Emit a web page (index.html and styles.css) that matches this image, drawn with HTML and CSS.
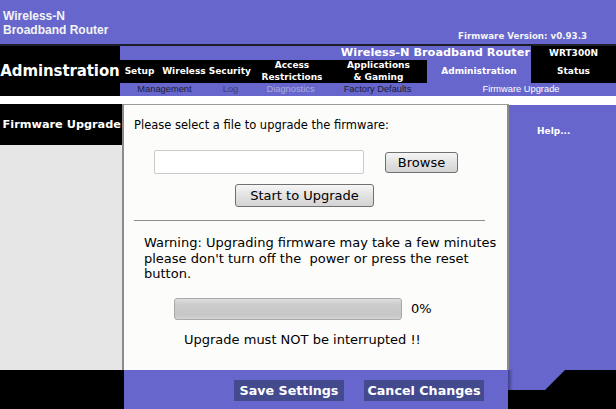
FILE: index.html
```html
<!DOCTYPE html>
<html lang="en">
<head>
<meta charset="utf-8">
<title>Firmware Upgrade</title>
<link rel="stylesheet" href="styles.css">
</head>
<body>
<div class="page">
  <header class="top">
    <div class="brand">Wireless-N<br>Broadband Router</div>
    <div class="fw">Firmware Version: v0.93.3</div>
  </header>

  <nav class="nav">
    <div class="nav-title">Adminstration</div>
    <div class="nav-grid">
      <div class="strip">Wireless-N Broadband Router</div>
      <div class="model">
        <span class="model-name">WRT300N</span>
        <span class="model-tab">Status</span>
      </div>
      <div class="tabs">
        <div class="tab tab-setup">Setup</div>
        <div class="tab tab-wireless">Wireless Security</div>
        <div class="tab tab-access">Access<br>Restrictions</div>
        <div class="tab tab-apps">Applications<br>&amp; Gaming</div>
        <div class="tab tab-admin">Administration</div>
      </div>
      <div class="sub">
        <span class="sub-item sub-mgmt">Management</span>
        <span class="sub-item sub-log">Log</span>
        <span class="sub-item sub-diag">Diagnostics</span>
        <span class="sub-item sub-fact">Factory Defaults</span>
        <span class="sub-item sub-fw">Firmware Upgrade</span>
      </div>
    </div>
  </nav>

  <div class="spacer"></div>

  <div class="body">
    <aside class="side">
      <div class="side-head">Firmware Upgrade</div>
    </aside>
    <main class="main">
      <p class="intro">Please select a file to upgrade the firmware:</p>
      <div class="file-row">
        <div class="file-input"></div>
        <button class="btn btn-browse" type="button">Browse</button>
      </div>
      <div class="start-row">
        <button class="btn btn-start" type="button">Start to Upgrade</button>
      </div>
      <div class="rule"></div>
      <p class="warning">Warning: Upgrading firmware may take a few minutes please don't turn off the&nbsp; power or press the reset button.</p>
      <div class="progress-row">
        <div class="progress"></div>
        <span class="pct">0%</span>
      </div>
      <p class="note">Upgrade must NOT be interrupted !!</p>
    </main>
    <aside class="help">
      <div class="help-text">Help...</div>
    </aside>
  </div>

  <footer class="foot">
    <div class="foot-left"></div>
    <div class="foot-bar">
      <button class="fbtn fbtn-save" type="button">Save Settings</button>
      <button class="fbtn fbtn-cancel" type="button">Cancel Changes</button>
    </div>
    <div class="foot-right">
      <div class="foot-tab"></div>
    </div>
  </footer>
</div>
</body>
</html>
```

FILE: styles.css
```css
* { box-sizing: border-box; }

html, body {
  margin: 0;
  padding: 0;
  background: #ffffff;
}

.page {
  width: 616px;
  height: 409px;
  overflow: hidden;
  font-family: "DejaVu Sans", Verdana, sans-serif;
  color: #000;
}

/* ---------- top header ---------- */
.top {
  height: 46px;
  background: #6666cc;
  border-bottom: 2px solid #1e1e2a;
  display: flex;
  justify-content: space-between;
  padding: 9px 29px 0 3px;
}

.brand {
  font-family: "Liberation Sans", Arial, sans-serif;
  font-weight: bold;
  font-size: 12px;
  line-height: 14px;
  color: #f4f4f4;
}

.fw {
  align-self: flex-end;
  margin-bottom: 2px;
  font-weight: bold;
  font-size: 8.7px;
  line-height: 12px;
  color: #f4f4f4;
}

/* ---------- navigation ---------- */
.nav {
  display: flex;
  height: 50px;
}

.nav-title {
  width: 120px;
  background: #000;
  color: #fff;
  font-weight: bold;
  font-size: 15px;
  letter-spacing: -0.1px;
  white-space: nowrap;
  display: flex;
  align-items: center;
  justify-content: center;
}

.nav-grid {
  flex: 1;
  display: grid;
  grid-template-columns: 411px 85px;
  grid-template-rows: 14px 23px 13px;
}

.strip {
  grid-column: 1;
  grid-row: 1;
  background: #6666cc;
  color: #fff;
  font-weight: bold;
  font-size: 11.3px;
  line-height: 14px;
  text-align: right;
  padding-right: 1px;
  white-space: nowrap;
}

.model {
  grid-column: 2;
  grid-row: 1 / 3;
  background: #000;
  color: #fff;
  font-weight: bold;
  font-size: 9px;
  display: grid;
  grid-template-rows: 14px 23px;
  text-align: center;
}

.model-name {
  line-height: 14px;
}

.model-tab {
  line-height: 23px;
}

.tabs {
  grid-column: 1;
  grid-row: 2;
  display: flex;
  background: #000;
}

.tab {
  color: #fff;
  font-weight: bold;
  font-size: 9px;
  line-height: 11.5px;
  text-align: center;
  white-space: nowrap;
  display: flex;
  align-items: center;
  justify-content: center;
}

.tab-setup { width: 39px; }
.tab-wireless { width: 95px; }
.tab-access { width: 76px; }
.tab-apps { width: 97px; }
.tab-admin { width: 104px; background: #6666cc; }

.sub {
  grid-column: 1 / 3;
  grid-row: 3;
  background: #6666cc;
  display: flex;
  font-family: "Liberation Sans", Arial, sans-serif;
  font-size: 9.3px;
  line-height: 13px;
}

.sub-item {
  text-align: center;
  white-space: nowrap;
}

.sub-mgmt { width: 89px; color: #1c1c30; }
.sub-log { width: 43px; color: #3e3e70; }
.sub-diag { width: 77px; color: #aeaedc; }
.sub-fact { width: 97px; color: #1c1c30; }
.sub-fw { width: 190px; color: #ffffff; }

/* ---------- spacer ---------- */
.spacer {
  height: 8px;
  background: #ffffff;
}

/* ---------- body ---------- */
.body {
  display: flex;
  height: 266px;
}

.side {
  width: 122px;
  background: #e6e6e6;
}

.side-head {
  height: 41px;
  background: #000;
  color: #fff;
  font-weight: bold;
  font-size: 11.3px;
  white-space: nowrap;
  display: flex;
  align-items: center;
  justify-content: flex-end;
  padding-right: 1px;
}

.main {
  width: 387px;
  background: #fcfcfa;
  border-left: 2px solid #8c8c8c;
  border-right: 2px solid #8c8c8c;
  border-top: 1px solid #9c9c9c;
}

.intro {
  margin: 13px 0 0 10px;
  font-size: 11.5px;
  line-height: 14px;
  white-space: nowrap;
}

.file-row {
  display: flex;
  align-items: center;
  margin: 18px 0 0 30px;
}

.file-input {
  width: 210px;
  height: 24px;
  background: #ffffff;
  border: 1px solid #cbcbcb;
  border-radius: 2px;
}

.btn {
  font-family: "DejaVu Sans", Verdana, sans-serif;
  font-size: 13px;
  color: #000;
  padding: 0;
  background: linear-gradient(#f6f6f6, #e2e2e2 50%, #d4d4d4);
  border: 1px solid #707070;
  border-radius: 3px;
}

.btn-browse {
  width: 73px;
  height: 21px;
  margin-left: 21px;
}

.start-row {
  margin: 10px 0 0 111px;
}

.btn-start {
  display: block;
  width: 139px;
  height: 23px;
}

.rule {
  margin: 13px 0 0 10px;
  width: 351px;
  height: 1px;
  background: #8c8c8c;
}

.warning {
  margin: 14px 0 0 20px;
  width: 362px;
  font-size: 13px;
  line-height: 15.5px;
}

.progress-row {
  display: flex;
  align-items: center;
  margin: 16px 0 0 50px;
}

.progress {
  width: 228px;
  height: 22px;
  border: 1px solid #a9a9a9;
  border-radius: 3px;
  background: linear-gradient(#dedede, #cbcbcb 30%, #c6c6c6 80%, #d4d4d4);
}

.pct {
  margin-left: 9px;
  font-size: 13px;
}

.note {
  margin: 12px 0 0 60px;
  font-size: 13px;
  line-height: 15.5px;
  white-space: nowrap;
}

.help {
  flex: 1;
  background: #6666cc;
  margin-top: 1px;
  padding: 21px 0 0 28px;
}

.help-text {
  color: #fff;
  font-weight: bold;
  font-size: 9px;
}

/* ---------- footer ---------- */
.foot {
  display: flex;
  height: 39px;
}

.foot-left {
  width: 124px;
  background: #000;
}

.foot-bar {
  width: 384px;
  background: #6666cc;
  display: flex;
  align-items: flex-start;
  gap: 20px;
  padding: 10px 0 0 110px;
}

.fbtn {
  height: 21px;
  padding: 0;
  border: none;
  background: #434a8e;
  color: #fff;
  font-family: "DejaVu Sans", Verdana, sans-serif;
  font-weight: bold;
  font-size: 12.7px;
  white-space: nowrap;
}

.fbtn-save { width: 110px; }
.fbtn-cancel { width: 120px; }

.foot-right {
  flex: 1;
  background: #000;
}

.foot-tab {
  width: 57px;
  height: 20px;
  background: linear-gradient(to right, #40408a, #6666cc 5px);
  clip-path: polygon(0 0, 100% 0, 65% 100%, 0 100%);
}
```
